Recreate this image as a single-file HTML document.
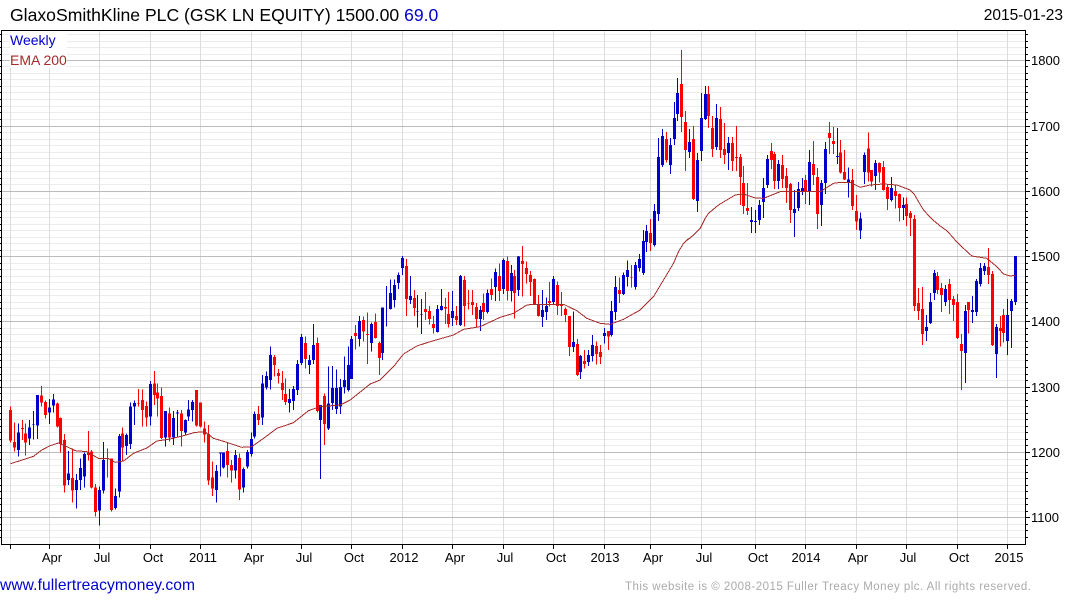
<!DOCTYPE html>
<html lang="en">
<head>
<meta charset="utf-8">
<title>GlaxoSmithKline PLC chart</title>
<style>
html,body{margin:0;padding:0;background:#fff;width:1075px;height:600px;overflow:hidden}
svg{display:block}
text{font-family:"Liberation Sans",Arial,sans-serif}
.w{fill:none;stroke-width:3}
.b{fill:none;stroke-width:9}
.r{stroke:#ff0000}
.u{stroke:#0000cc}
.e{fill:none;stroke:#a52a2a;stroke-width:3}
</style>
</head>
<body>
<svg xmlns="http://www.w3.org/2000/svg" width="1075" height="600" viewBox="0 0 1075 600">
<defs>
<clipPath id="c"><rect x="2" y="31" width="1023" height="513"/></clipPath>
<path id="m" d="M0 34.5h1028M0 41.5h1028M0 47.5h1028M0 54.5h1028M0 60.5h1028M0 66.5h1028M0 73.5h1028M0 79.5h1028M0 86.5h1028M0 92.5h1028M0 99.5h1028M0 106.5h1028M0 112.5h1028M0 119.5h1028M0 126.5h1028M0 132.5h1028M0 139.5h1028M0 145.5h1028M0 152.5h1028M0 158.5h1028M0 165.5h1028M0 171.5h1028M0 178.5h1028M0 184.5h1028M0 191.5h1028M0 198.5h1028M0 204.5h1028M0 211.5h1028M0 217.5h1028M0 224.5h1028M0 230.5h1028M0 237.5h1028M0 243.5h1028M0 250.5h1028M0 256.5h1028M0 263.5h1028M0 269.5h1028M0 276.5h1028M0 282.5h1028M0 289.5h1028M0 295.5h1028M0 302.5h1028M0 308.5h1028M0 315.5h1028M0 321.5h1028M0 328.5h1028M0 334.5h1028M0 341.5h1028M0 347.5h1028M0 354.5h1028M0 360.5h1028M0 367.5h1028M0 374.5h1028M0 380.5h1028M0 387.5h1028M0 393.5h1028M0 400.5h1028M0 406.5h1028M0 413.5h1028M0 419.5h1028M0 426.5h1028M0 432.5h1028M0 439.5h1028M0 445.5h1028M0 452.5h1028M0 459.5h1028M0 465.5h1028M0 472.5h1028M0 478.5h1028M0 485.5h1028M0 491.5h1028M0 498.5h1028M0 504.5h1028M0 511.5h1028M0 517.5h1028M0 524.5h1028M0 530.5h1028M0 537.5h1028"/>
</defs>
<rect width="1075" height="600" fill="#fff"/>
<g shape-rendering="crispEdges">
<use href="#m" stroke="#000" stroke-width="1"/>
<rect x="2" y="31" width="1023.5" height="513" fill="#fff"/>
<g clip-path="url(#c)">
<use href="#m" stroke="#ececec" stroke-width="1"/>
<path stroke="#dcdcdc" d="M10.5 31V544M49.5 31V544M99.5 31V544M150.5 31V544M200.5 31V544M251.5 31V544M301.5 31V544M351.5 31V544M402.5 31V544M452.5 31V544M503.5 31V544M553.5 31V544M604.5 31V544M650.5 31V544M701.5 31V544M755.5 31V544M805.5 31V544M856.5 31V544M906.5 31V544M957.5 31V544M1007.5 31V544"/>
<path stroke="#bbbbbb" d="M2 60.5H1025M2 126.5H1025M2 191.5H1025M2 256.5H1025M2 321.5H1025M2 387.5H1025M2 452.5H1025M2 517.5H1025"/>
</g>
<rect x="10" y="31" width="57" height="37" fill="#fff"/>

<!-- z2 -->
<g transform="translate(.17,370) scale(.33333)">
<path class="w r" d="M31 110V218M43 158V245M67 150V210M76 160V257M124 48V110M136 92V145M172 98V172M181 142V247M193 192V368M217 236V398M265 183V272M274 240V355M286 342V440M322 235V323M334 265V425M367 172V272M415 57V110M427 58V170M439 95V170M463 3V105M472 40V140M484 52V207M508 113V215M544 120V230M589 60V170M601 97V172M613 155V217M625 165V345M637 275V378M682 218V322M694 270V338M718 250V390"/>
<path class="b r" d="M31 120V212M43 216V233M67 174V177M76 190V218M124 77V98M136 96V135M172 100V170M181 144V222M193 210V347M217 324V362M265 248V255M274 245V353M286 352V426M334 265V420M367 190V233M415 99V101M427 90V120M439 108V143M463 40V75M472 68V86M484 78V204M508 130V202M544 130V183M589 60V167M601 98V170M613 175V194M625 192V332M637 322V356M682 243V285M694 285V302M718 264V359"/>
<path class="w u" d="M55 160V260M88 150V225M100 123V208M112 75V207M148 87V162M160 72V128M205 243V345M229 312V416M241 265V360M253 248V352M298 350V467M310 216V370M346 355V418M358 192V383M379 190V255M391 98V237M403 92V165M451 33V167M496 123V230M520 123V225M532 120V200M556 148V197M565 90V153M577 90V155M649 285V398M661 247V320M670 247V295M706 240V325M730 292V368"/>
<path class="b u" d="M55 188V240M88 172V206M100 162V164M112 75V167M148 112V128M160 88V107M205 310V330M229 330V360M241 294V330M253 252V320M298 360V422M310 270V362M346 378V414M358 198V365M379 195V228M391 110V222M403 99V110M451 42V140M496 123V202M520 144V202M532 127V130M556 150V187M565 118V140M577 96V120M649 303V360M661 247V250M670 247V293M706 255V302M730 297V353"/>
</g>

<!-- z7 -->
<g transform="translate(180.17,230) scale(.33333)">
<path class="w r" d="M235 528V585M283 375V440M295 417V460M307 423V510M316 445V525M376 320V415M412 322V548M433 490V645M526 285V358M550 260V335M562 247V402M586 250V325M598 335V435M679 87V258"/>
<path class="b r" d="M235 552V570M283 381V405M295 429V438M307 459V480M316 492V516M376 339V387M412 339V543M433 498V582M526 309V318M550 270V305M562 312V315M586 276V324M598 339V384M679 108V207"/>
<path class="w u" d="M202 660V715M214 608V680M223 545V625M247 435V585M259 425V478M271 350V478M328 477V548M340 468V540M352 390V495M364 312V405M388 375V432M400 282V402M421 525V747M445 410V600M457 408V540M469 418V552M481 447V552M493 380V490M505 350V485M514 318V447M538 258V350M574 278V365M607 232V390M619 168V290M631 148V238M643 148V232M655 127V177M667 78V135M691 138V222"/>
<path class="b u" d="M202 666V710M214 627V672M223 552V620M247 460V563M259 438V472M271 375V450M328 507V519M340 477V513M352 402V480M364 321V399M388 390V405M400 345V390M421 525V570M445 520V595M457 474V519M469 474V537M481 471V530M493 450V471M505 405V480M514 327V447M538 273V327M574 282V339M607 232V369M631 189V237M643 165V210M655 135V159M667 84V114M691 198V210"/>
</g>

<!-- z3 -->
<g transform="translate(360.17,230) scale(.33333)">
<path class="w r" d="M163 180V258M196 186V270M208 228V283M220 258V310M256 204V282M265 186V292M289 228V285M313 138V290M325 180V238M337 180V255M349 219V292M370 190V270M394 145V210M418 100V213M442 80V212M463 120V266M487 48V200M499 95V160M511 123V198M523 145V225M535 195V260M568 156V230M592 155V255M604 186V258M616 232V276M628 258V378M652 327V438M673 360V415M709 335V403M721 345V402M745 303V360M778 143V219M814 105V172"/>
<path class="b r" d="M163 204V234M196 237V246M208 243V267M220 282V294M256 231V236M265 252V282M289 258V270M313 150V228M325 219V221M337 216V225M349 231V267M370 219V246M394 177V195M418 138V183M442 93V183M463 138V189M487 93V102M499 114V132M511 135V156M523 147V222M535 222V258M568 213V219M592 165V228M604 225V228M616 237V255M628 258V351M652 342V435M673 393V402M709 348V372M721 366V381M745 303V320M778 180V192M814 141V143"/>
<path class="w u" d="M172 195V293M184 207V312M232 225V308M244 177V242M277 183V288M301 135V288M361 228V303M382 178V250M406 115V213M430 85V192M454 105V215M475 78V198M547 180V291M559 202V270M580 138V222M640 245V366M661 375V447M685 360V408M697 315V395M733 294V340M754 213V320M766 138V270M790 128V195M802 92V170M826 96V178M838 72V125"/>
<path class="b u" d="M172 243V245M184 252V254M232 237V306M244 228V240M277 243V264M301 138V285M361 240V267M382 189V246M406 126V171M430 90V177M454 129V183M475 80V180M547 240V261M559 228V246M580 147V216M640 336V351M661 378V426M685 375V396M697 345V378M733 309V318M754 243V315M766 171V246M790 135V192M802 120V141M826 105V171M838 87V114"/>
</g>

<!-- z4 -->
<g transform="translate(620.17,40) scale(.33333)">
<path class="w r" d="M91 537V633M139 276V368M184 30V276M196 213V393M220 258V480M265 138V264M277 228V351M301 201V354M313 249V372M337 291V393M349 258V393M361 342V495M370 378V522M382 429V525M454 309V387M463 336V447M487 345V444M499 384V489M511 429V549M556 405V492M580 303V435M592 384V567M628 246V342M640 261V342"/>
<path class="b r" d="M91 579V609M139 297V360M184 132V231M196 246V330M220 297V477M265 162V228M277 264V327M301 237V330M313 327V345M337 309V363M349 351V354M361 351V411M370 429V498M382 504V513M454 333V360M463 342V423M487 375V417M499 408V444M511 432V510M556 420V456M580 372V405M592 411V522M628 279V294M640 303V312"/>
<path class="w u" d="M70 570V705M79 555V636M103 492V620M115 294V543M127 267V381M151 294V402M163 186V315M172 114V243M208 267V354M232 339V516M244 159V363M256 138V240M289 192V330M325 291V390M394 501V579M406 510V579M418 480V555M430 414V534M442 345V444M475 360V447M523 450V591M535 426V513M547 414V465M568 330V495M604 420V558M616 306V462M652 264V372"/>
<path class="b u" d="M70 603V699M79 573V606M103 513V615M115 351V522M127 288V375M151 315V375M163 234V297M172 159V222M208 306V336M232 360V483M244 234V333M256 162V237M289 234V321M325 309V339M394 540V546M406 543V546M418 495V540M430 444V486M442 357V435M475 372V423M523 507V519M535 447V504M547 444V456M568 366V456M604 429V495M616 327V429M652 348V351"/>
</g>

<!-- z5 -->
<g transform="translate(840.17,120) scale(.33333)">
<path class="w r" d="M1 60V160M13 90V180M37 147V270M49 225V330M85 38V185M94 150V200M118 128V187M130 123V212M142 195V270M166 195V265M178 220V305M199 232V318M211 273V348M223 285V573M235 504V600M247 501V675M292 456V522M304 489V576M328 477V582M340 528V603M352 522V657M364 642V810M385 546V640M445 384V492M457 453V678M481 588V680M490 567V667"/>
<path class="b r" d="M1 97V158M13 156V178M37 180V258M49 273V305M85 85V157M94 150V184M118 129V158M130 141V210M142 201V237M166 213V228M178 222V264M199 252V288M211 279V294M223 297V558M235 549V573M247 567V642M292 468V510M304 504V525M328 492V540M340 537V555M352 546V654M364 672V693M385 546V570M445 441V465M457 462V675M481 624V633M490 585V639"/>
<path class="w u" d="M25 142V233M61 277V357M73 97V192M106 120V210M154 171V245M190 232V300M259 585V663M271 519V612M283 450V540M316 495V558M376 555V789M397 528V609M409 477V588M421 429V500M433 429V465M469 612V774M502 537V705M514 537V684M526 408V555"/>
<path class="b u" d="M25 178V186M61 295V332M73 105V156M106 129V168M154 204V240M190 255V264M259 621V633M271 546V609M283 459V519M316 507V546M376 573V699M397 570V576M409 483V576M421 444V492M433 438V453M469 621V702M502 585V663M514 543V573M526 408V546"/>
</g>

<!-- EMA -->
<path class="e" transform="translate(.17,370) scale(.33333)" d="M31 281L60 272L100 259L125 240L150 227L175 219L200 230L225 242L260 245L295 265L325 266L345 277L370 273L400 250L440 234L470 213L510 207L550 197L585 187L615 186L640 205L680 217L725 232"/>
<path class="e" transform="translate(180.17,230) scale(.33333)" d="M185 652L215 650L250 625L290 595L340 578L385 542L420 530L480 525L510 510L570 462L600 450L640 410L670 372"/>
<path class="e" transform="translate(360.17,230) scale(.33333)" d="M130 372L170 348L210 335L280 315L310 298L360 290L420 262L460 250L500 225L520 223L610 223L650 242L680 265L720 280L750 283L790 268L840 240L880 200L895 175L910 150L925 125L940 100L955 65L970 40L985 25"/>
<path class="e" transform="translate(620.17,40) scale(.33333)" d="M202 600L220 585L240 565L255 535L265 520L295 495L320 480L345 465L370 462L405 474L430 475L480 455L560 455L600 455L640 430L660 427"/>
<path class="e" transform="translate(840.17,120) scale(.33333)" d="M0 187L30 187L60 202L90 195L130 192L170 195L210 210L222 222L235 245L250 270L275 297L300 318L320 332L345 360L370 385L395 408L440 415L470 440L490 462L510 468L526 466"/>

<!-- frame and ticks -->
<path stroke="#000" fill="none" d="M1.5 30V545M1 30.5H1026M1025.5 30V545M1 544.5H1026"/>
<path stroke="#000" d="M1026 60.5h4M1026 126.5h4M1026 191.5h4M1026 256.5h4M1026 321.5h4M1026 387.5h4M1026 452.5h4M1026 517.5h4"/>
<path stroke="#000" d="M10.5 545v4M49.5 545v4M99.5 545v4M150.5 545v4M200.5 545v4M251.5 545v4M301.5 545v4M351.5 545v4M402.5 545v4M452.5 545v4M503.5 545v4M553.5 545v4M604.5 545v4M650.5 545v4M701.5 545v4M755.5 545v4M805.5 545v4M856.5 545v4M906.5 545v4M957.5 545v4M1007.5 545v4"/>
</g>

<text x="10" y="21" font-size="17.6" fill="#000">GlaxoSmithKline PLC (GSK LN EQUITY) 1500.00 <tspan fill="#0000cc">69.0</tspan></text>
<text x="1063" y="20" font-size="15.5" fill="#000" text-anchor="end">2015-01-23</text>
<text x="10" y="45" font-size="14" fill="#0000cc">Weekly</text>
<text x="10" y="65" font-size="14" fill="#a52a2a">EMA 200</text>

<g font-size="13" fill="#000">
<text x="1031" y="65">1800</text>
<text x="1031" y="131">1700</text>
<text x="1031" y="196">1600</text>
<text x="1031" y="261">1500</text>
<text x="1031" y="326">1400</text>
<text x="1031" y="392">1300</text>
<text x="1031" y="457">1200</text>
<text x="1031" y="522">1100</text>
</g>
<g font-size="13" fill="#000" text-anchor="middle">
<text x="52" y="562">Apr</text>
<text x="102" y="562">Jul</text>
<text x="153" y="562">Oct</text>
<text x="203" y="562">2011</text>
<text x="254" y="562">Apr</text>
<text x="304" y="562">Jul</text>
<text x="354" y="562">Oct</text>
<text x="404" y="562">2012</text>
<text x="455" y="562">Apr</text>
<text x="505" y="562">Jul</text>
<text x="556" y="562">Oct</text>
<text x="605" y="562">2013</text>
<text x="653" y="562">Apr</text>
<text x="704" y="562">Jul</text>
<text x="758" y="562">Oct</text>
<text x="806" y="562">2014</text>
<text x="858" y="562">Apr</text>
<text x="908" y="562">Jul</text>
<text x="959" y="562">Oct</text>
<text x="1009" y="562">2015</text>
</g>
<text x="0" y="590" font-size="15.6" fill="#0000cc" textLength="195" lengthAdjust="spacing">www.fullertreacymoney.com</text>
<text x="625" y="590" font-size="11.5" fill="#aaaaaa" textLength="406" lengthAdjust="spacing">This website is © 2008-2015 Fuller Treacy Money plc. All rights reserved.</text>
</svg>
</body>
</html>
